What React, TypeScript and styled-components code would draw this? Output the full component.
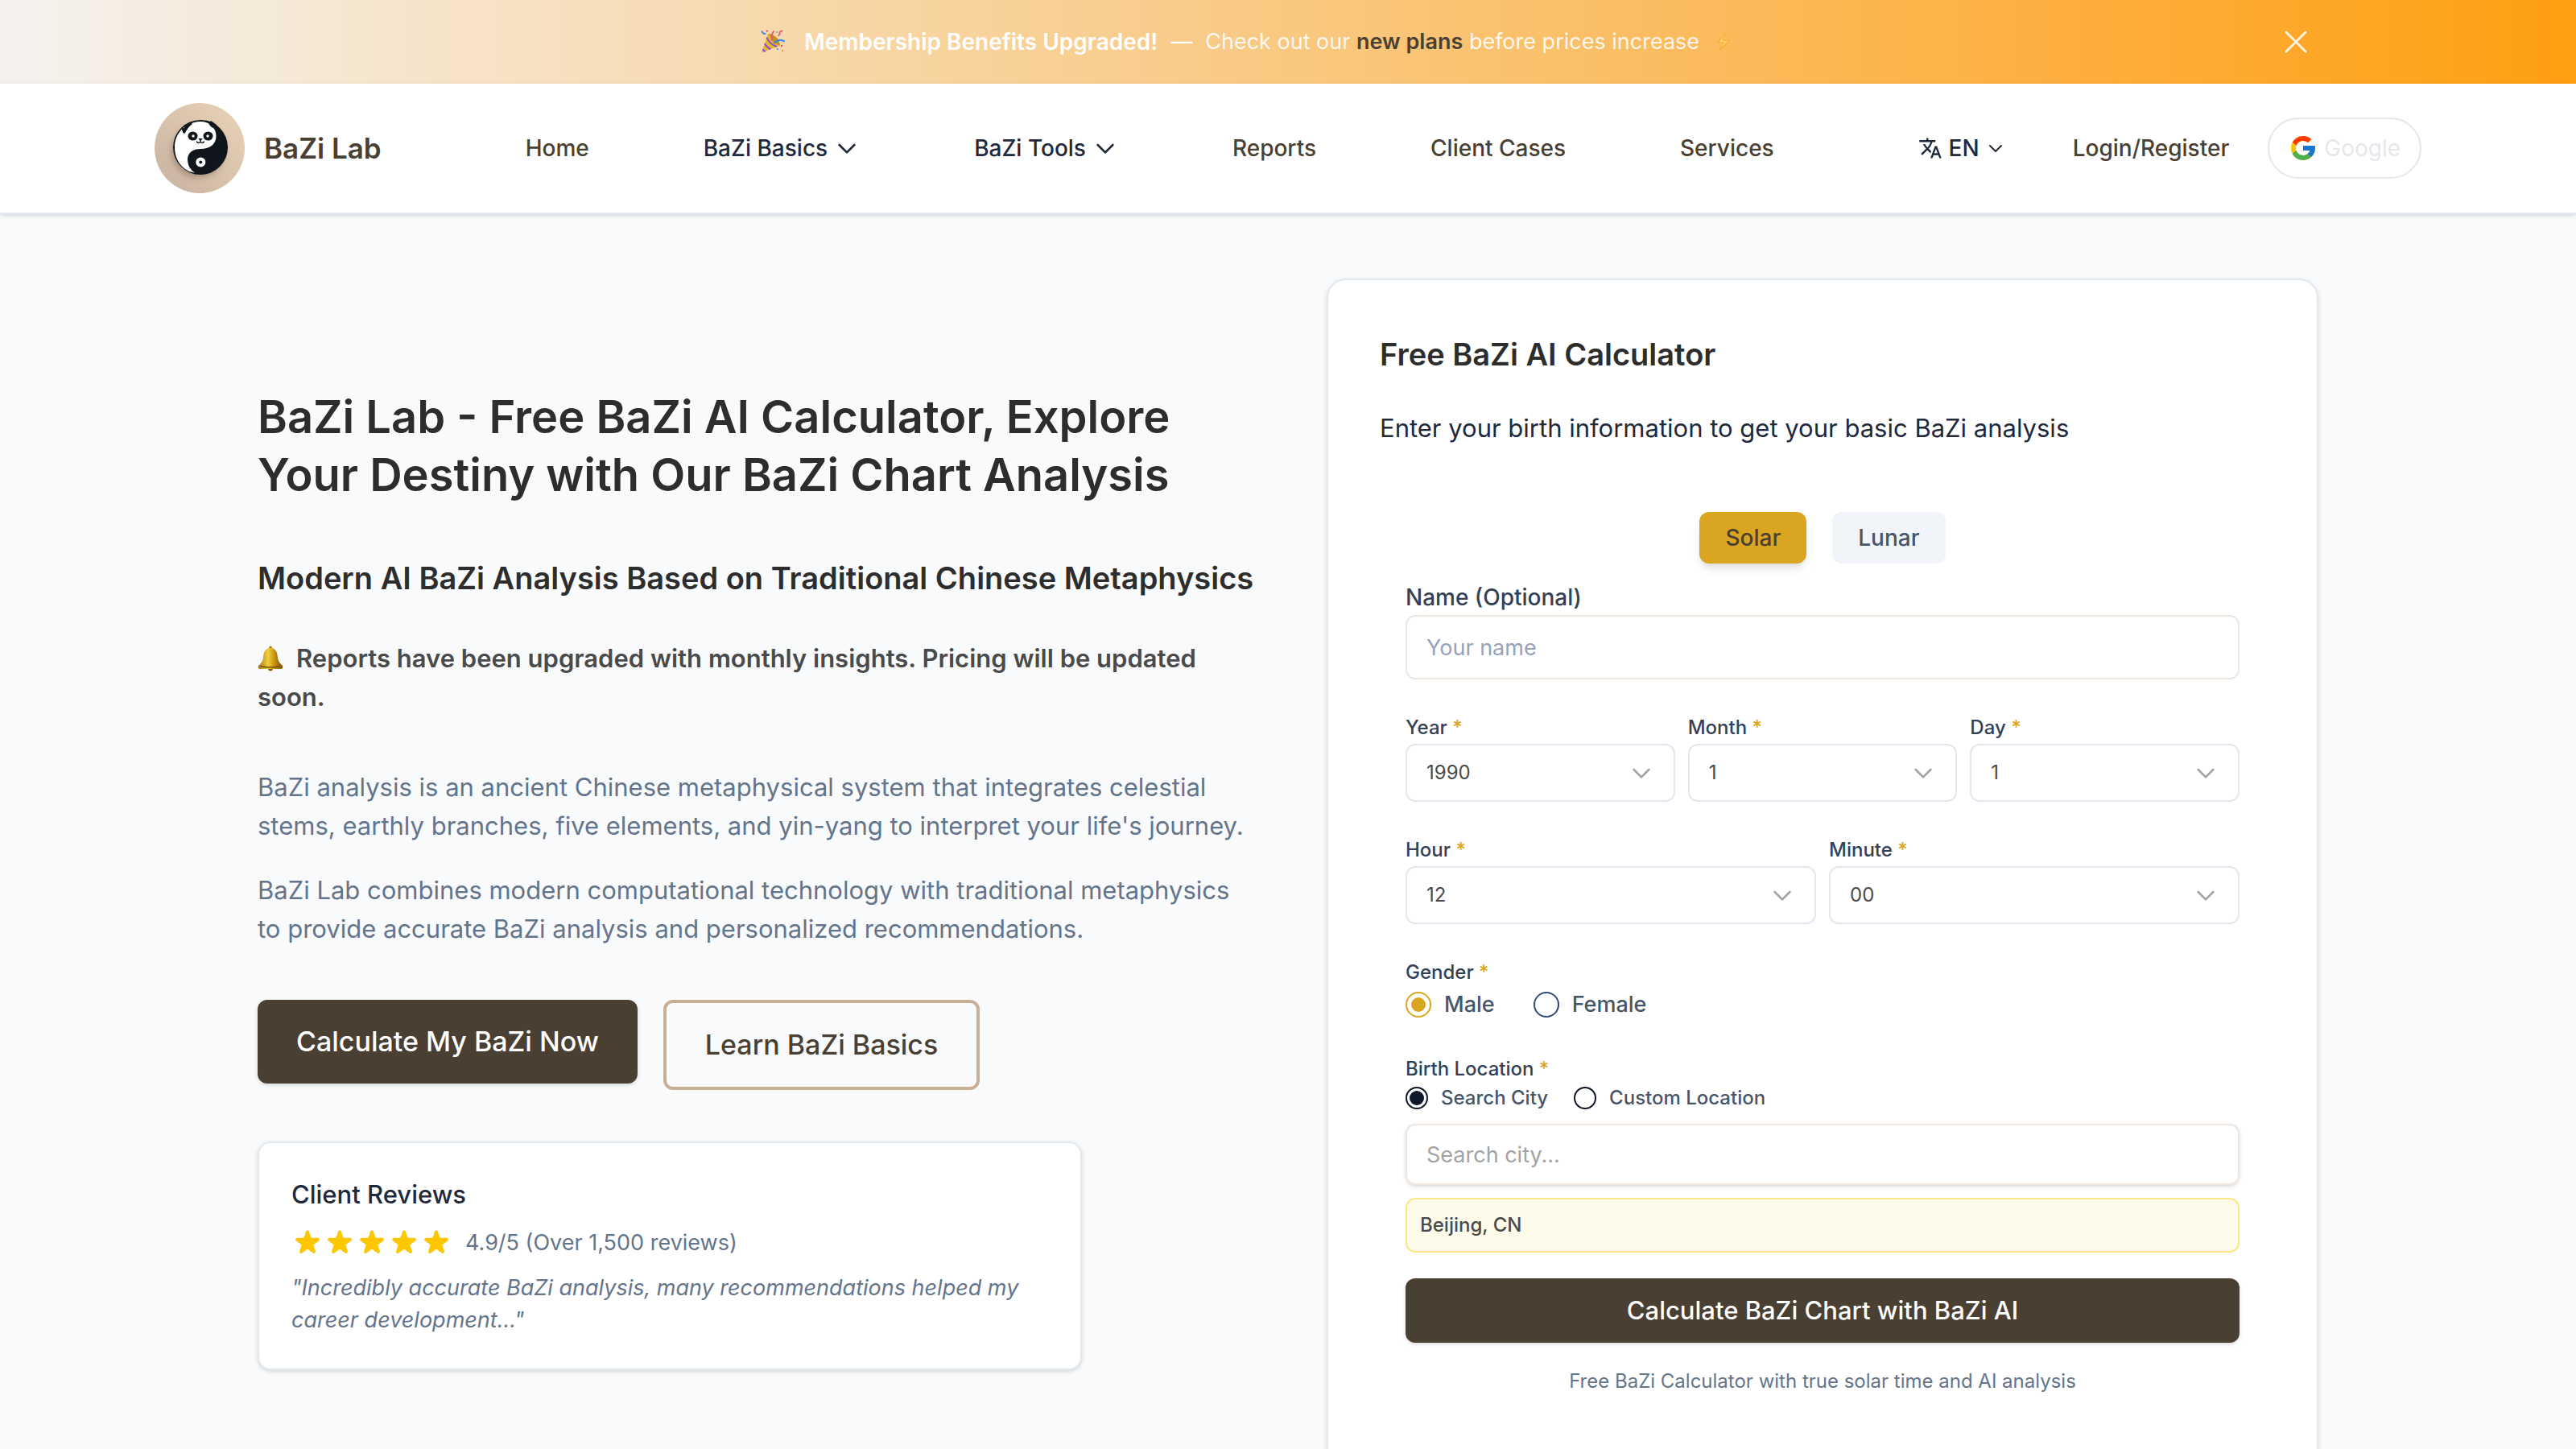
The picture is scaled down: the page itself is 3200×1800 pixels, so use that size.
import React from "react";
import styled, { createGlobalStyle, css } from "styled-components";
import { FcGoogle } from "react-icons/fc";
import { HiStar } from "react-icons/hi";
import { MdTranslate } from "react-icons/md";

const GlobalStyle = createGlobalStyle`
  *, *::before, *::after { box-sizing: border-box; }
  html { scrollbar-width: none; }
  body {
    margin: 0;
    background: #f8fafc;
    color: #1e293b;
    font-family: Inter, "Liberation Sans", sans-serif;
    font-size: 27px;
    line-height: 40px;
  }
  h1, h2, h3, p, blockquote, fieldset { margin: 0; padding: 0; border: 0; min-width: 0; }
  button, input, select { font: inherit; color: inherit; margin: 0; }
  button { cursor: pointer; }
  a { color: inherit; text-decoration: none; }
  svg { display: block; flex: none; }
`;

/* ---------- banner ---------- */

const Banner = styled.div`
  height: 104px;
  padding: 0 320px;
  display: flex;
  align-items: center;
  gap: 44px;
  background: linear-gradient(90deg, #f4f2ef, #ff9f12);
  color: #fff;
`;

const BannerText = styled.p`
  flex: 1;
  display: flex;
  align-items: center;
  justify-content: center;
  gap: 16px;
`;

const BannerLead = styled.strong`
  padding-left: 8px;
  font-size: 28px;
  font-weight: 600;
`;

const BannerLink = styled.a`
  font-weight: 600;
  color: #4a3f33;
`;

const BannerOffer = styled.span`
  color: rgba(255, 255, 255, 0.9);
`;

const CloseButton = styled.button`
  width: 56px;
  height: 56px;
  padding: 4px;
  border: 0;
  background: none;
  color: rgba(255, 255, 255, 0.85);
`;

/* ---------- header ---------- */

const Header = styled.header`
  position: relative;
  height: 162px;
  padding: 0 192px;
  display: flex;
  align-items: center;
  justify-content: space-between;
  background: #fff;
  border-bottom: 2px solid #e2e8f0;
  box-shadow: 0 2px 6px rgba(0, 0, 0, 0.1), 0 2px 4px -2px rgba(0, 0, 0, 0.1);
  font-size: 28px;
`;

const Brand = styled.a`
  display: flex;
  align-items: center;
  gap: 24px;
  font-size: 35px;
  font-weight: 600;
  color: #4a3f33;
`;

const Nav = styled.nav`
  display: flex;
  align-items: center;
  gap: 142px;
`;

const NavLink = styled.a`
  color: #4a3f33;
  font-weight: 500;
`;

const MenuButton = styled.button<{ $trailing?: boolean }>`
  display: flex;
  align-items: center;
  gap: 8px;
  padding: 0;
  border: 0;
  background: none;
  font-weight: 500;
  color: #1e293b;
  margin-right: ${(p) => (p.$trailing ? "36px" : "0")};
`;

const Actions = styled.div`
  display: flex;
  align-items: center;
  gap: 48px;
`;

const GoogleButton = styled.button`
  display: flex;
  align-items: center;
  gap: 8px;
  height: 76px;
  padding: 0 24px;
  border: 2px solid #e5e7eb;
  border-radius: 38px;
  background: #fff;
  color: #e5e7eb;
`;

/* ---------- hero ---------- */

const Hero = styled.main`
  padding: 80px 320px;
  display: grid;
  grid-template-columns: repeat(2, minmax(0, 1fr));
  gap: 96px;
  align-items: center;
`;

const Intro = styled.section`
  display: flex;
  flex-direction: column;
`;

const Title = styled.h1`
  font-size: 56px;
  line-height: 72px;
  font-weight: 600;
  color: #2d2d2d;
`;

const Subtitle = styled.h2`
  margin-top: 64px;
  font-size: 38px;
  line-height: 56px;
  font-weight: 600;
  color: #2d2d2d;
  white-space: nowrap;
`;

const Notice = styled.p`
  margin-top: 48px;
  font-size: 31px;
  line-height: 48px;
  font-weight: 600;
  color: #4a4a4a;
  svg {
    display: inline-block;
    vertical-align: -5px;
    margin-right: 16px;
  }
`;

const Copy = styled.div`
  margin-top: 64px;
  display: grid;
  gap: 32px;
  font-size: 31px;
  line-height: 48px;
  color: #64748b;
`;

const ButtonRow = styled.div`
  margin-top: 64px;
  display: flex;
  align-items: flex-start;
  gap: 32px;
`;

const solid = css`
  background: #4a3f33;
  color: #fff;
  border: 0;
  box-shadow: 0 2px 6px rgba(0, 0, 0, 0.1), 0 2px 4px -2px rgba(0, 0, 0, 0.1);
`;

const outline = css`
  background: transparent;
  color: #4a3f33;
  border: 4px solid #c9af95;
`;

const LargeButton = styled.button<{ $outline?: boolean }>`
  padding: 24px 48px;
  border-radius: 12px;
  font-size: 34px;
  line-height: 56px;
  font-weight: 500;
  ${(p) => (p.$outline ? outline : solid)}
`;

const ReviewCard = styled.section`
  margin-top: 64px;
  width: 1024px;
  max-width: 100%;
  padding: 40px;
  display: grid;
  gap: 16px;
  background: #fff;
  border: 2px solid #e2e8f0;
  border-radius: 16px;
  box-shadow: 0 2px 6px rgba(0, 0, 0, 0.1), 0 2px 4px -2px rgba(0, 0, 0, 0.1);
  color: #64748b;
`;

const ReviewTitle = styled.h3`
  font-size: 31px;
  line-height: 48px;
  font-weight: 500;
  color: #1e293b;
`;

const Rating = styled.div`
  display: flex;
  align-items: center;
  gap: 16px;
`;

const Stars = styled.span`
  display: flex;
  color: #fdc700;
`;

const Quote = styled.blockquote`
  font-style: italic;
`;

/* ---------- calculator ---------- */

const Calculator = styled.section`
  padding: 64px;
  background: #fff;
  border: 2px solid #e2e8f0;
  border-radius: 24px;
  box-shadow: 0 2px 6px rgba(0, 0, 0, 0.1), 0 2px 4px -2px rgba(0, 0, 0, 0.1);
`;

const CardTitle = styled.h2`
  font-size: 38px;
  line-height: 56px;
  font-weight: 600;
  color: #2d2d2d;
`;

const CardLead = styled.p`
  margin: 40px 0 48px;
  font-size: 31px;
  line-height: 48px;
`;

const Form = styled.form`
  padding: 32px 32px 40px;
  display: flex;
  flex-direction: column;
`;

const Tabs = styled.div`
  display: flex;
  justify-content: center;
  gap: 32px;
  margin-bottom: 24px;
`;

const Tab = styled.button<{ $active?: boolean }>`
  height: 64px;
  padding: 0 32px;
  border: 0;
  border-radius: 12px;
  font-size: 28px;
  font-weight: 500;
  background: ${(p) => (p.$active ? "#daa520" : "#f1f5f9")};
  color: ${(p) => (p.$active ? "#4a3f33" : "#475569")};
  box-shadow: ${(p) =>
    p.$active ? "0 8px 12px -2px rgba(0,0,0,0.1), 0 4px 8px -4px rgba(0,0,0,0.1)" : "none"};
`;

const Fields = styled.div`
  display: grid;
  gap: 44px;
`;

const FieldRow = styled.div`
  display: grid;
  grid-auto-flow: column;
  grid-auto-columns: 1fr;
  gap: 16px;
`;

const Field = styled.div`
  display: grid;
  gap: 4px;
`;

const labelText = css`
  font-size: 24px;
  line-height: 32px;
  font-weight: 500;
  color: #334155;
`;

const Label = styled.label`
  ${labelText}
`;

const NameLabel = styled.label`
  font-size: 28px;
  line-height: 36px;
  font-weight: 500;
  color: #334155;
`;

const Legend = styled.legend`
  ${labelText}
  padding: 0;
  margin-bottom: 4px;
`;

const Star = styled.span`
  color: #daa520;
`;

const TextInput = styled.input<{ $search?: boolean }>`
  width: 100%;
  height: ${(p) => (p.$search ? "76px" : "80px")};
  padding: 0 24px;
  border: 2px solid #f0e6df;
  border-radius: 12px;
  background: #fff;
  outline: none;
  box-shadow: ${(p) =>
    p.$search ? "0 2px 6px rgba(0,0,0,0.1), 0 2px 4px -2px rgba(0,0,0,0.1)" : "none"};
  &::placeholder {
    color: ${(p) => (p.$search ? "#a3a3a3" : "#94a3b8")};
    opacity: 1;
  }
`;

const SelectBox = styled.div`
  display: grid;
  align-items: center;
  color: #a3a3a3;
  > * {
    grid-area: 1 / 1;
  }
  > svg {
    justify-self: end;
    margin-right: 26px;
    pointer-events: none;
  }
`;

const Select = styled.select`
  appearance: none;
  width: 100%;
  height: 72px;
  padding: 0 24px;
  border: 2px solid #e2e8f0;
  border-radius: 12px;
  background: #fff;
  font-size: 24px;
  color: #4a4a4a;
`;

const RadioRow = styled.div<{ $small?: boolean }>`
  display: flex;
  align-items: center;
  height: ${(p) => (p.$small ? "32px" : "40px")};
  gap: ${(p) => (p.$small ? "32px" : "48px")};
  font-size: ${(p) => (p.$small ? "24px" : "27px")};
`;

const RadioLabel = styled.label`
  display: flex;
  align-items: center;
  gap: 16px;
  font-weight: 500;
  color: #475569;
`;

const Radio = styled.input<{ $size: number; $on: string; $off: string }>`
  appearance: none;
  flex: none;
  width: ${(p) => p.$size}px;
  height: ${(p) => p.$size}px;
  display: grid;
  place-items: center;
  border: 2px solid ${(p) => p.$off};
  border-radius: 50%;
  background: #fff;
  &:checked {
    border-color: ${(p) => p.$on};
  }
  &:checked::before {
    content: "";
    width: 18px;
    height: 18px;
    border-radius: 50%;
    background: ${(p) => p.$on};
  }
`;

const LocationSet = styled.fieldset`
  display: grid;
  gap: 16px;
`;

const SelectedCity = styled.output`
  display: block;
  padding: 16px;
  border: 2px solid #fee685;
  border-radius: 12px;
  background: #fffbeb;
  font-size: 24px;
  line-height: 32px;
  font-weight: 500;
  color: #4a4a4a;
`;

const SubmitButton = styled.button`
  height: 80px;
  margin: 32px 0;
  border-radius: 12px;
  font-size: 31px;
  font-weight: 500;
  ${solid}
`;

const FormNote = styled.p`
  font-size: 24px;
  line-height: 32px;
  text-align: center;
  color: #64748b;
`;

/* ---------- drawings ---------- */

const Chevron = ({ size = 32 }: { size?: number }) => (
  <svg width={size} height={size} viewBox="0 0 24 24" fill="none" stroke="currentColor" strokeWidth="2" strokeLinecap="round" strokeLinejoin="round" aria-hidden="true">
    <path d="M19 9l-7 7-7-7" />
  </svg>
);

const CloseIcon = () => (
  <svg width="48" height="48" viewBox="0 0 24 24" fill="none" stroke="currentColor" strokeWidth="1.5" strokeLinecap="round" aria-hidden="true">
    <path d="M6 18L18 6M6 6l12 12" />
  </svg>
);

const PandaLogo = () => (
  <svg width="112" height="112" viewBox="0 0 112 112" aria-hidden="true">
    <defs>
      <linearGradient id="sand" x1="0.1" y1="0.9" x2="0.9" y2="0.1">
        <stop offset="0" stopColor="#cab5a3" />
        <stop offset="0.5" stopColor="#d9c3ac" />
        <stop offset="1" stopColor="#e6d0b5" />
      </linearGradient>
      <filter id="soft" x="-30%" y="-30%" width="160%" height="160%">
        <feGaussianBlur stdDeviation="4" />
      </filter>
    </defs>
    <circle cx="56" cy="56" r="56" fill="url(#sand)" />
    <circle cx="54" cy="60" r="32" fill="#6d5747" opacity="0.5" filter="url(#soft)" />
    <circle cx="57" cy="55" r="34" fill="#11161c" />
    <path d="M57 23 C36 24 25 39 25 55 C25 72 36 85 50 86.500 C43 82 41 76 41 69 C42 61 48 57 57 57 C69 57 76.500 51 76.500 41 C76.500 31 69 23 57 23Z" fill="#fff" />
    <path d="M45 24 Q36 27 35 36 L37.500 38 Q41 30 47 26Z" fill="#11161c" />
    <path d="M33 31 L36 38 L41 32Z" fill="#11161c" />
    <path d="M67 25 Q70 31 76 32 L77 27 L70 22Z" fill="#11161c" />
    <ellipse cx="47.500" cy="41" rx="6" ry="5.500" fill="#11161c" />
    <ellipse cx="66.500" cy="41" rx="6" ry="5.500" fill="#11161c" />
    <circle cx="48" cy="41" r="1.700" fill="#fff" />
    <circle cx="66" cy="41" r="1.700" fill="#fff" />
    <path d="M54 44h6l-3 3z" fill="#11161c" />
    <path d="M52.500 48q2 2.800 4.500.3q2.500 2.500 4.500-.3M57 46v2.500" fill="none" stroke="#11161c" strokeWidth="1.400" strokeLinecap="round" />
    <circle cx="57.300" cy="73.500" r="6" fill="#fff" />
    <circle cx="57.300" cy="73.500" r="2" fill="#11161c" />
  </svg>
);

const PartyPopper = () => (
  <svg width="30" height="30" viewBox="0 0 30 30" aria-hidden="true">
    <path d="M9 5L1 28.500L24 19.500Q22 9 9 5Z" fill="#e3b62c" />
    <path d="M10 4.500Q23 8 24 19.500Q14 17 10 4.500Z" fill="#c4931b" />
    <path d="M7.500 9.500Q10 17 20 21M5 17Q7 21.500 12.500 24.200M2.500 24Q3.500 26.500 6 26.800" fill="none" stroke="#8a4fd0" strokeWidth="2" />
    <path d="M14 13Q13 6 16 2" fill="none" stroke="#e0577f" strokeWidth="2" strokeLinecap="round" />
    <path d="M17 16Q22 11 29 14" fill="none" stroke="#3f86dd" strokeWidth="2.200" strokeLinecap="round" />
    <path d="M22 7q2-1 1.500-3t3-2.500" fill="none" stroke="#e0577f" strokeWidth="1.800" strokeLinecap="round" />
    <path d="M1.500 2q1 3 4 3" fill="none" stroke="#3f86dd" strokeWidth="1.800" strokeLinecap="round" />
    <circle cx="8" cy="1.500" r="1.200" fill="#e0577f" />
    <circle cx="20" cy="3" r="1.100" fill="#6bbf59" />
    <circle cx="26" cy="20" r="1.200" fill="#e0577f" />
    <circle cx="21" cy="24" r="1.100" fill="#3f86dd" />
    <circle cx="27" cy="26" r="1.200" fill="#e79a7a" />
  </svg>
);

const Bolt = () => (
  <svg width="28" height="28" viewBox="0 0 28 28" aria-hidden="true">
    <path d="M18 1L5 15h8L7 27L23 12h-9z" fill="#fbb03a" />
    <path d="M16 5L9 14h6L11 21L19 13h-7z" fill="#ffd977" />
  </svg>
);

const Bell = () => (
  <svg width="32" height="32" viewBox="0 0 32 32" aria-hidden="true">
    <defs>
      <linearGradient id="brass" x1="0" x2="1">
        <stop offset="0" stopColor="#a8730a" />
        <stop offset="0.4" stopColor="#f3cf3e" />
        <stop offset="0.65" stopColor="#c89412" />
        <stop offset="1" stopColor="#7d5207" />
      </linearGradient>
    </defs>
    <circle cx="16" cy="28.500" r="3" fill="#8a5a0a" />
    <circle cx="16" cy="2.500" r="2" fill="#b8860f" />
    <path d="M16 3C9 3 7.500 9 7 15C6.500 20 4 22 1 25Q0 29 3 29H29Q32 29 31 25C28 22 25.500 20 25 15C24.500 9 23 3 16 3Z" fill="url(#brass)" />
    <path d="M3 25.500Q16 28.500 29 25.500" fill="none" stroke="#7d5207" strokeWidth="1.400" />
  </svg>
);

/* ---------- parts ---------- */

const Required = () => <Star aria-hidden="true">*</Star>;

function SelectField({ id, label, value }: { id: string; label: string; value: string }) {
  return (
    <Field>
      <Label htmlFor={id}>
        {label} <Required />
      </Label>
      <SelectBox>
        <Select id={id} defaultValue={value}>
          <option value={value}>{value}</option>
        </Select>
        <Chevron />
      </SelectBox>
    </Field>
  );
}

export default function App() {
  return (
    <>
      <GlobalStyle />
      <Banner>
        <BannerText>
          <PartyPopper />
          <BannerLead>Membership Benefits Upgraded!</BannerLead>
          <span>—</span>
          <BannerOffer>
            Check out our <BannerLink href="#plans">new plans</BannerLink> before prices increase
          </BannerOffer>
          <Bolt />
        </BannerText>
        <CloseButton type="button" aria-label="Close">
          <CloseIcon />
        </CloseButton>
      </Banner>

      <Header>
        <Brand href="#home">
          <PandaLogo />
          BaZi Lab
        </Brand>
        <Nav>
          <NavLink href="#home">Home</NavLink>
          <MenuButton type="button">
            BaZi Basics <Chevron />
          </MenuButton>
          <MenuButton type="button">
            BaZi Tools <Chevron />
          </MenuButton>
          <NavLink href="#reports">Reports</NavLink>
          <NavLink href="#cases">Client Cases</NavLink>
          <NavLink href="#services">Services</NavLink>
        </Nav>
        <Actions>
          <MenuButton type="button" $trailing>
            <MdTranslate size={30} />
            EN <Chevron size={24} />
          </MenuButton>
          <NavLink href="#login">Login/Register</NavLink>
          <GoogleButton type="button">
            <FcGoogle size={36} />
            Google
          </GoogleButton>
        </Actions>
      </Header>

      <Hero>
        <Intro>
          <Title>BaZi Lab - Free BaZi AI Calculator, Explore Your Destiny with Our BaZi Chart Analysis</Title>
          <Subtitle>Modern AI BaZi Analysis Based on Traditional Chinese Metaphysics</Subtitle>
          <Notice>
            <Bell />
            Reports have been upgraded with monthly insights. Pricing will be updated soon.
          </Notice>
          <Copy>
            <p>
              BaZi analysis is an ancient Chinese metaphysical system that integrates celestial stems, earthly
              branches, five elements, and yin-yang to interpret your life's journey.
            </p>
            <p>
              BaZi Lab combines modern computational technology with traditional metaphysics to provide accurate
              BaZi analysis and personalized recommendations.
            </p>
          </Copy>
          <ButtonRow>
            <LargeButton type="button">Calculate My BaZi Now</LargeButton>
            <LargeButton type="button" $outline>
              Learn BaZi Basics
            </LargeButton>
          </ButtonRow>
          <ReviewCard>
            <ReviewTitle>Client Reviews</ReviewTitle>
            <Rating>
              <Stars>
                {[0, 1, 2, 3, 4].map((n) => (
                  <HiStar key={n} size={40} />
                ))}
              </Stars>
              4.9/5 (Over 1,500 reviews)
            </Rating>
            <Quote>"Incredibly accurate BaZi analysis, many recommendations helped my career development..."</Quote>
          </ReviewCard>
        </Intro>

        <Calculator>
          <CardTitle>Free BaZi AI Calculator</CardTitle>
          <CardLead>Enter your birth information to get your basic BaZi analysis</CardLead>
          <Form onSubmit={(e) => e.preventDefault()}>
            <Tabs>
              <Tab type="button" $active>
                Solar
              </Tab>
              <Tab type="button">Lunar</Tab>
            </Tabs>
            <Fields>
              <Field>
                <NameLabel htmlFor="name">Name (Optional)</NameLabel>
                <TextInput id="name" type="text" placeholder="Your name" />
              </Field>
              <FieldRow>
                <SelectField id="year" label="Year" value="1990" />
                <SelectField id="month" label="Month" value="1" />
                <SelectField id="day" label="Day" value="1" />
              </FieldRow>
              <FieldRow>
                <SelectField id="hour" label="Hour" value="12" />
                <SelectField id="minute" label="Minute" value="00" />
              </FieldRow>
              <fieldset>
                <Legend>
                  Gender <Required />
                </Legend>
                <RadioRow>
                  <RadioLabel>
                    <Radio type="radio" name="gender" defaultChecked $size={32} $on="#daa520" $off="#2f4a75" />
                    Male
                  </RadioLabel>
                  <RadioLabel>
                    <Radio type="radio" name="gender" $size={32} $on="#daa520" $off="#2f4a75" />
                    Female
                  </RadioLabel>
                </RadioRow>
              </fieldset>
              <LocationSet>
                <div>
                  <Legend as="div">
                    Birth Location <Required />
                  </Legend>
                  <RadioRow $small>
                    <RadioLabel>
                      <Radio type="radio" name="place" defaultChecked $size={28} $on="#0f172a" $off="#0f172a" />
                      Search City
                    </RadioLabel>
                    <RadioLabel>
                      <Radio type="radio" name="place" $size={28} $on="#0f172a" $off="#0f172a" />
                      Custom Location
                    </RadioLabel>
                  </RadioRow>
                </div>
                <TextInput type="search" aria-label="Search city" placeholder="Search city..." $search />
                <SelectedCity>Beijing, CN</SelectedCity>
              </LocationSet>
            </Fields>
            <SubmitButton type="submit">Calculate BaZi Chart with BaZi AI</SubmitButton>
            <FormNote>Free BaZi Calculator with true solar time and AI analysis</FormNote>
          </Form>
        </Calculator>
      </Hero>
    </>
  );
}
